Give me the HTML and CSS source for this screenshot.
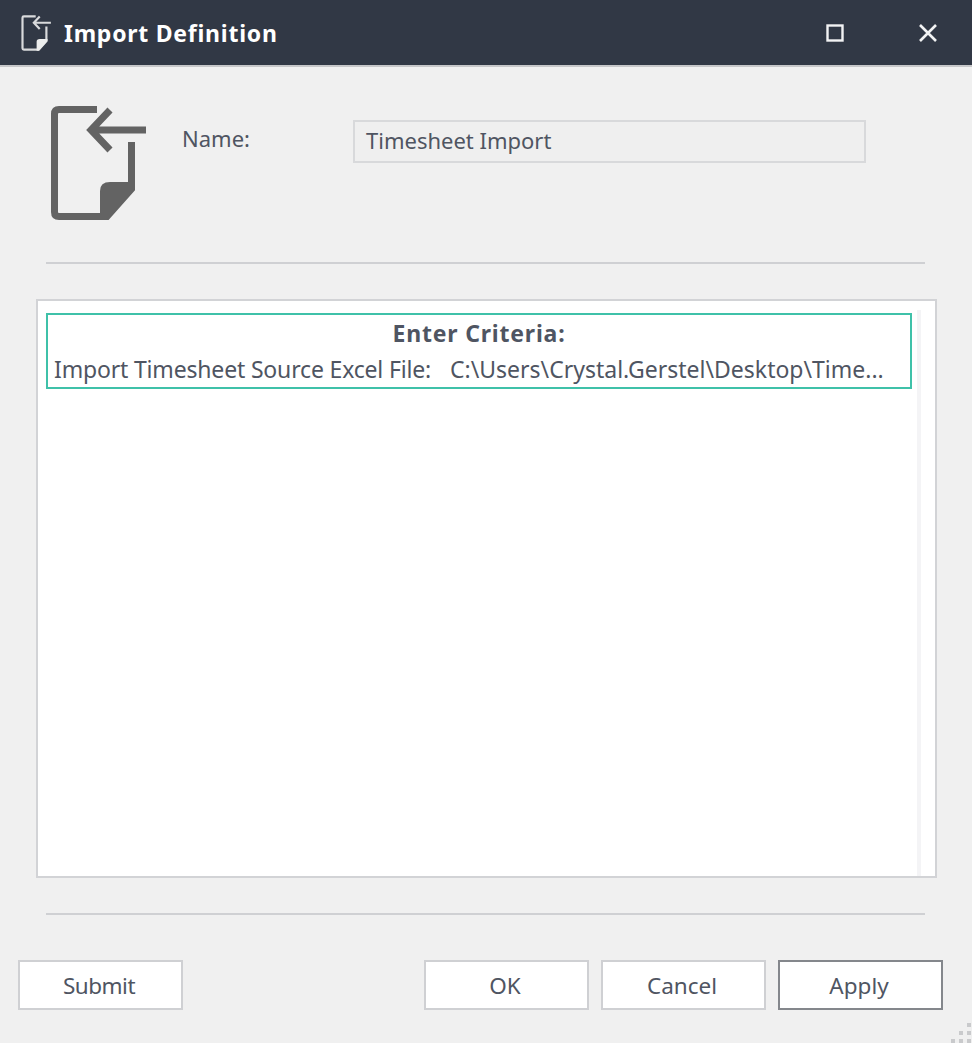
FILE: index.html
```html
<!DOCTYPE html>
<html lang="en">
<head>
  <meta charset="UTF-8">
  <meta name="viewport" content="width=device-width, initial-scale=1.0">
  <title>Import Definition</title>
  <link rel="stylesheet" href="styles.css">
</head>
<body>

  <!-- Title bar -->
  <div class="titlebar">
    <svg class="title-icon" viewBox="0 0 96 116" fill="none" stroke="#d9dadc" stroke-width="7">
      <path d="M47 4.5H9Q4.5 4.5 4.5 9V107Q4.5 111.5 9 111.5H57L81.5 84V37"/>
      <path d="M50 115V86Q50 77 60 77H85V84L57 115Z" fill="#eceded" stroke="none"/>
      <path d="M96 25H41M60 5L41 25L60 45"/>
    </svg>
    <div class="title-text">Import Definition</div>
    <div class="title-btn">
      <svg viewBox="0 0 18 18" fill="none" stroke="#f2f3f4" stroke-width="2.4"><rect x="1.5" y="1.5" width="15" height="15"/></svg>
    </div>
    <div class="title-btn">
      <svg viewBox="0 0 18 18" fill="none" stroke="#f2f3f4" stroke-width="2.6"><path d="M1 1L17 17M17 1L1 17"/></svg>
    </div>
  </div>

  <div class="content">
    <!-- Name row -->
    <div class="name-row">
      <svg class="big-icon" viewBox="0 0 96 116" fill="none" stroke="#636363" stroke-width="7">
        <path d="M47 4.5H9Q4.5 4.5 4.5 9V107Q4.5 111.5 9 111.5H57L81.5 84V37"/>
        <path d="M50 115V86Q50 77 60 77H85V84L57 115Z" fill="#636363" stroke="none"/>
        <path d="M96 25H41M60 5L41 25L60 45"/>
      </svg>
      <label class="name-label">Name:</label>
      <div class="name-input">Timesheet Import</div>
    </div>

    <div class="divider"></div>

    <!-- Criteria list -->
    <div class="list-box">
      <div class="list-inner">
        <div class="list-item">
          <div class="item-head">Enter Criteria:</div>
          <div class="item-line">
            <span class="item-key">Import Timesheet Source Excel File:</span>
            <span class="item-value">C:\Users\Crystal.Gerstel\Desktop\Time...</span>
          </div>
        </div>
      </div>
      <div class="list-scroll"></div>
    </div>

    <div class="divider bottom"></div>

    <!-- Buttons -->
    <div class="button-row">
      <div class="btn tight">Submit</div>
      <div class="spacer"></div>
      <div class="btn">OK</div>
      <div class="btn">Cancel</div>
      <div class="btn default">Apply</div>
    </div>
  </div>

  <svg class="grip" viewBox="0 0 22 22" fill="#c9cacc">
    <rect x="17" y="2" width="4" height="4"/>
    <rect x="9" y="10" width="4" height="4"/><rect x="17" y="10" width="4" height="4"/>
    <rect x="1" y="18" width="4" height="4"/><rect x="9" y="18" width="4" height="4"/><rect x="17" y="18" width="4" height="4"/>
  </svg>

</body>
</html>
```

FILE: styles.css
```css
* {
  box-sizing: border-box;
  margin: 0;
  padding: 0;
}
body {
  font-family: "Noto Sans", "Open Sans", sans-serif;
  font-size: 22px;
  color: #4f5562;
  background: #f0f0f0;
  height: 100vh;
  overflow: hidden;
  position: relative;
  display: flex;
  flex-direction: column;
}
.titlebar {
  height: 67px;
  flex: none;
  background: #313845;
  border-bottom: 2px solid #c6c7c9;
  display: flex;
  align-items: center;
  gap: 5px;
  padding-left: 21px;
}
.title-icon {
  width: 30px;
  height: 36px;
  margin-right: 8px;
}
.title-text {
  color: #fff;
  font-weight: 700;
  font-size: 23px;
  letter-spacing: 0.75px;
  flex: 1;
}
.title-btn {
  width: 88px;
  display: flex;
  justify-content: center;
}
.title-btn svg {
  width: 18px;
  height: 18px;
}
.content {
  flex: 1;
  display: flex;
  flex-direction: column;
  padding: 0 29px 0 18px;
}
.name-row {
  height: 195px;
  flex: none;
  display: flex;
  align-items: flex-start;
  padding-left: 32px;
}
.big-icon {
  width: 96px;
  height: 116px;
  margin-top: 38px;
  margin-right: 36px;
}
.name-label {
  width: 171px;
  margin-top: 55px;
  line-height: 32px;
}
.name-input {
  width: 513px;
  height: 43px;
  margin-top: 53px;
  border: 2px solid #d8d9db;
  background: #efefef;
  padding-left: 11px;
  line-height: 37px;
}
.divider {
  height: 2px;
  flex: none;
  background: #cfd0d3;
  margin: 0 18px 0 28px;
}
.list-box {
  height: 579px;
  flex: none;
  margin: 35px 6px 0 18px;
  background: #fff;
  border: 2px solid #d2d3d6;
  display: flex;
  padding: 12px 0 0 8px;
}
.list-inner {
  flex: none;
  width: 866px;
}
.list-item {
  height: 76px;
  border: 2px solid #3fc1a9;
  padding: 0 6px;
}
.item-head {
  font-size: 23px;
  font-weight: 700;
  letter-spacing: 0.8px;
  text-align: center;
  line-height: 37px;
}
.item-line {
  display: flex;
  font-size: 23px;
  line-height: 35px;
  white-space: nowrap;
}
.item-key {
  letter-spacing: -0.17px;
  margin-right: 19px;
}
.list-scroll {
  width: 4px;
  margin: -3px 0 0 5px;
  background: #f4f4f6;
}
.divider.bottom {
  margin-top: 35px;
}
.button-row {
  display: flex;
  gap: 12px;
  margin-top: 45px;
}
.spacer {
  flex: 1;
}
.btn {
  width: 165px;
  height: 50px;
  background: #fff;
  border: 2px solid #cfd0d3;
  font-size: 22.5px;
  text-align: center;
  line-height: 48px;
  padding-right: 3px;
}
.btn.tight {
  letter-spacing: -0.5px;
}
.btn.default {
  border-color: #84878c;
}
.grip {
  position: absolute;
  right: 0;
  bottom: 0;
  width: 22px;
  height: 22px;
}
```
